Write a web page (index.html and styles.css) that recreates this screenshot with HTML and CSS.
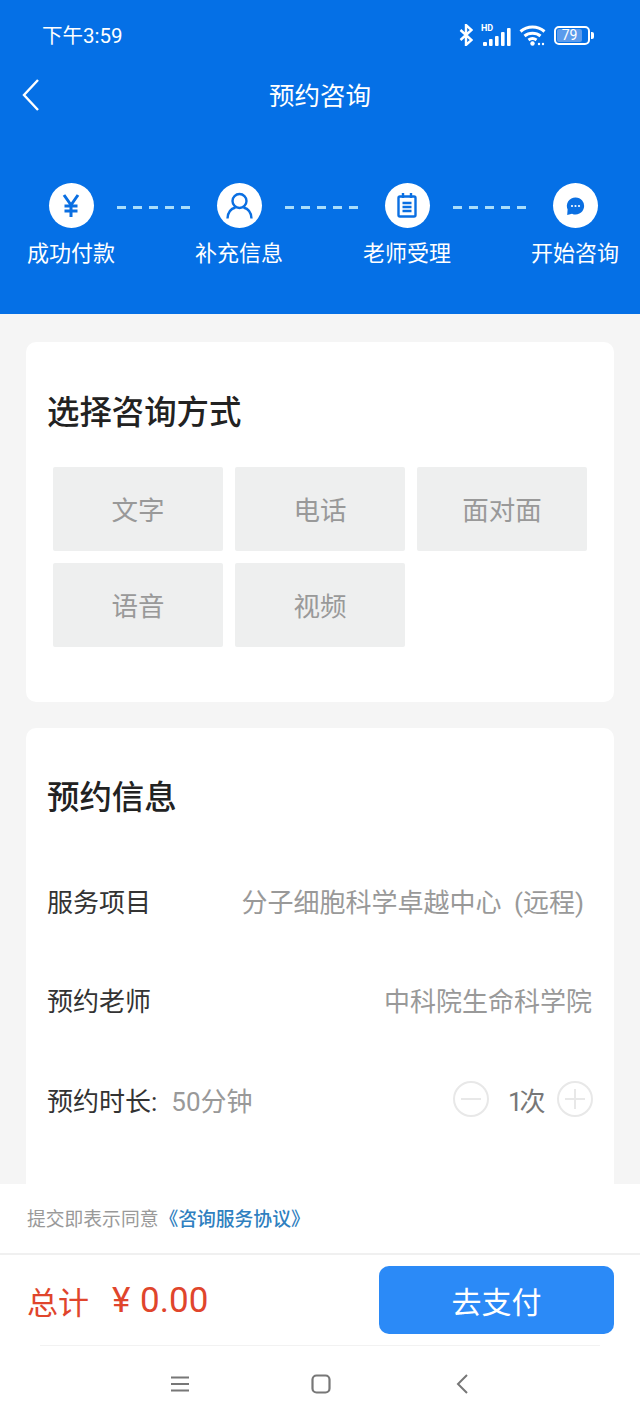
FILE: index.html
```html
<!DOCTYPE html>
<html lang="zh-CN">
  <head>
    <meta charset="UTF-8" />
    <meta name="viewport" content="width=device-width, initial-scale=1.0" />
    <title>预约咨询</title>
    <link rel="stylesheet" href="styles.css">
  </head>
  <body>
    <div class="page">
      <!-- 顶部蓝色区域 -->
      <header class="top">
        <div class="status-bar">
          <span class="status-time">下午3:59</span>
          <div class="status-icons">
            <svg viewBox="0 0 14 22" width="14" height="22" fill="none" stroke="#fff" stroke-width="2.4"><path d="M1.500 6l11 10-5.500 5V1l5.500 5-11 10"/></svg>
            <div class="signal">
              <span class="signal-hd">HD</span>
              <svg viewBox="0 0 30 18" width="30" height="18" fill="#fff"><rect x="2" y="14" width="4" height="4" rx="1"/><rect x="8" y="11" width="3.600" height="7" rx="1"/><rect x="14" y="8" width="3.600" height="10" rx="1"/><rect x="20" y="4" width="3.600" height="14" rx="1"/><rect x="26" y="0" width="3.600" height="18" rx="1"/></svg>
            </div>
            <svg viewBox="0 0 27 22" width="27" height="22" fill="none" stroke="#fff" stroke-width="3"><path d="M1.500 7.500c7-6 17-6 24 0"/><path d="M5.500 12c4.500-3.800 11.500-3.800 16 0"/><path d="M9.500 16c2.400-1.800 5.600-1.800 8 0"/><circle cx="13.500" cy="19.500" r="2.200" fill="#fff" stroke="none"/><circle cx="20" cy="20" r="1.200" fill="#fff" stroke="none"/><circle cx="24" cy="20" r="1.200" fill="#fff" stroke="none"/></svg>
            <div class="battery">
              <div class="battery-body"><span class="battery-num">79</span></div>
              <span class="battery-cap"></span>
            </div>
          </div>
        </div>
        <div class="nav-bar">
          <svg class="nav-back" viewBox="0 0 18 34" width="18" height="34" fill="none" stroke="#fff" stroke-width="2.400"><path d="M16 2L2 17l14 15"/></svg>
          <h1>预约咨询</h1>
        </div>
        <div class="steps">
          <div class="step">
            <div class="step-circle">
              <svg viewBox="0 0 18 23" width="18" height="23" fill="none" stroke="#0a6fe2" stroke-width="3"><path d="M2 1l7 10 7-10M9 11v12M2.500 12h13M2.500 17h13"/></svg>
            </div>
            <span>成功付款</span>
          </div>
          <div class="step-line"></div>
          <div class="step">
            <div class="step-circle">
              <svg viewBox="0 0 27 27" width="27" height="27" fill="none" stroke="#0a6fe2" stroke-width="2.400"><circle cx="13.500" cy="9" r="7"/><path d="M1.500 26.500c.3-6.500 4-10 8-11M25.500 26.500c-.3-6.500-4-10-8-11"/></svg>
            </div>
            <span>补充信息</span>
          </div>
          <div class="step-line"></div>
          <div class="step">
            <div class="step-circle">
              <svg viewBox="0 0 20 25" width="20" height="25" fill="none" stroke="#0a6fe2" stroke-width="2.400"><rect x="1.500" y="3.500" width="17" height="20" rx="1.500"/><path d="M6 0v5M14 0v5M5.500 10h9M5.500 14h9M5.500 18h9"/></svg>
            </div>
            <span>老师受理</span>
          </div>
          <div class="step-line"></div>
          <div class="step">
            <div class="step-circle">
              <svg viewBox="0 0 20 20" width="20" height="20"><path d="M10.500 1.500a8.500 8.500 0 1 1-3.500 16.200L2.200 19 2.600 13.500A8.500 8.500 0 0 1 10.500 1.500z" fill="#0a6fe2"/><circle cx="7" cy="10" r="1.100" fill="#fff"/><circle cx="10.500" cy="10" r="1.100" fill="#fff"/><circle cx="14" cy="10" r="1.100" fill="#fff"/></svg>
            </div>
            <span>开始咨询</span>
          </div>
        </div>
      </header>

      <main class="content">
        <!-- 选择咨询方式 -->
        <section class="card card-ways">
          <h2>选择咨询方式</h2>
          <div class="ways">
            <div class="way">文字</div>
            <div class="way">电话</div>
            <div class="way">面对面</div>
            <div class="way">语音</div>
            <div class="way">视频</div>
          </div>
        </section>

        <!-- 预约信息 -->
        <section class="card card-info">
          <h2>预约信息</h2>
          <div class="info-row">
            <span class="info-label">服务项目</span>
            <span class="info-value info-service">分子细胞科学卓越中心 (远程)</span>
          </div>
          <div class="info-row">
            <span class="info-label">预约老师</span>
            <span class="info-value">中科院生命科学院</span>
          </div>
          <div class="info-row">
            <div>
              <span class="info-label">预约时长:</span><span class="info-value info-duration">50分钟</span>
            </div>
            <div class="stepper">
              <span class="stepper-btn stepper-minus"></span>
              <span class="stepper-num">1次</span>
              <span class="stepper-btn stepper-plus"></span>
            </div>
          </div>
        </section>
      </main>

      <!-- 底部支付栏 -->
      <footer class="bottom">
        <p class="agree">提交即表示同意<a>《咨询服务协议》</a></p>
        <div class="pay-row">
          <div class="total"><span>总计</span><span class="total-num">¥ 0.00</span></div>
          <button class="pay-btn">去支付</button>
        </div>
        <div class="sys-nav">
          <svg viewBox="0 0 18 16" width="18" height="16" fill="none" stroke="#777" stroke-width="2"><path d="M0 1.500h18M0 8h18M0 14.500h18"/></svg>
          <svg viewBox="0 0 20 20" width="20" height="20" fill="none" stroke="#777" stroke-width="2.200"><rect x="1.500" y="1.500" width="17" height="17" rx="4"/></svg>
          <svg class="sys-back" viewBox="0 0 12 20" width="12" height="20" fill="none" stroke="#777" stroke-width="2"><path d="M11 1L2 10l9 9"/></svg>
        </div>
      </footer>
    </div>
  </body>
</html>
```

FILE: styles.css
```css
* {
  box-sizing: border-box;
}
body {
  margin: 0;
  font-family: Roboto, "Noto Sans CJK SC", sans-serif;
  background-color: #f5f5f5;
  color: #333;
}
.page {
  display: flex;
  flex-direction: column;
  height: 1422px;
  overflow: hidden;
}

/* 顶部 */
.top {
  height: 314px;
  flex-shrink: 0;
  background-color: #0570e6;
  color: white;
}
.status-bar {
  display: flex;
  justify-content: space-between;
  align-items: center;
  height: 34px;
  margin-top: 17px;
  padding: 0 46px 0 42px;
}
.status-time {
  font-size: 20.500px;
}
.status-icons {
  display: flex;
  align-items: center;
  gap: 8px;
  margin-top: 2px;
}
.signal {
  position: relative;
  display: flex;
  align-items: flex-end;
  width: 30px;
  height: 22px;
}
.signal-hd {
  position: absolute;
  top: 0;
  left: 0;
  font-size: 9px;
  font-weight: 700;
  line-height: 9px;
}
.battery {
  display: flex;
  align-items: center;
  gap: 1px;
}
.battery-body {
  width: 36px;
  height: 19px;
  border: 2px solid #fff;
  border-radius: 5px;
  padding: 1px;
}
.battery-num {
  display: block;
  width: 25px;
  height: 13px;
  background-color: #5b9bec;
  border-radius: 2px;
  font-size: 14px;
  line-height: 13px;
  text-align: center;
}
.battery-cap {
  width: 3px;
  height: 7px;
  background-color: #fff;
  border-radius: 0 2px 2px 0;
}
.nav-bar {
  position: relative;
  display: flex;
  justify-content: center;
  align-items: center;
  height: 44px;
  margin-top: 20px;
}
.nav-bar h1 {
  margin: 0;
  font-size: 25.500px;
  font-weight: 400;
}
.nav-back {
  position: absolute;
  left: 22px;
  top: 7px;
}
.steps {
  display: flex;
  align-items: flex-start;
  justify-content: space-between;
  margin-top: 68px;
  padding: 0 20px 0 26px;
}
.step {
  display: flex;
  flex-direction: column;
  align-items: center;
  gap: 10px;
  width: 90px;
  font-size: 22px;
  line-height: 32px;
}
.step-circle {
  display: flex;
  align-items: center;
  justify-content: center;
  width: 45px;
  height: 45px;
  border-radius: 50%;
  background-color: white;
}
.step-line {
  width: 73px;
  height: 3px;
  margin: 23px 2px 0 -1px;
  background: repeating-linear-gradient(to right, #a9ddfb 0 9px, transparent 9px 16px);
}

/* 内容卡片 */
.content {
  flex: 1;
  min-height: 0;
  overflow: hidden;
  padding: 28px 26px 0;
}
.card {
  background-color: white;
  border-radius: 10px;
  padding: 0 22px 0 21px;
}
.card h2 {
  margin: 0;
  font-size: 32.400px;
  font-weight: 500;
  line-height: 46px;
  color: #222;
}
.card-ways {
  height: 360px;
  padding-top: 48px;
}
.ways {
  display: grid;
  grid-template-columns: repeat(3, 170px);
  grid-auto-rows: 84px;
  gap: 12px;
  margin: 31px 0 0 6px;
}
.way {
  display: flex;
  align-items: center;
  justify-content: center;
  padding-bottom: 2px;
  background-color: #eeefef;
  border-radius: 2px;
  font-size: 26.500px;
  color: #999;
}
.card-info {
  height: 480px;
  margin-top: 26px;
  padding-top: 47px;
}
.info-row {
  display: flex;
  justify-content: space-between;
  align-items: center;
  height: 99.500px;
  font-size: 26px;
}
.card-info h2 + .info-row {
  margin-top: 29.500px;
}
.info-label {
  color: #333;
}
.info-value {
  color: #999;
}
.info-service {
  padding-right: 8px;
  word-spacing: 6px;
}
.info-duration {
  margin-left: 14px;
}
.stepper {
  display: flex;
  align-items: center;
  margin-right: -1px;
}
.stepper-btn {
  position: relative;
  width: 36px;
  height: 36px;
  border: 2px solid #e8e8e8;
  border-radius: 50%;
}
.stepper-minus::before,
.stepper-plus::before {
  content: "";
  position: absolute;
  left: 6px;
  right: 6px;
  top: 15px;
  border-top: 2px solid #e8e8e8;
}
.stepper-plus::after {
  content: "";
  position: absolute;
  top: 6px;
  bottom: 6px;
  left: 15px;
  border-left: 2px solid #e8e8e8;
}
.stepper-num {
  width: 68px;
  padding-left: 19px;
  letter-spacing: -3px;
  color: #777;
}

/* 底部 */
.bottom {
  flex-shrink: 0;
  height: 238px;
  background-color: white;
}
.agree {
  display: flex;
  align-items: center;
  height: 71px;
  margin: 0;
  padding: 0 0 2px 27px;
  border-bottom: 2px solid #f0f0f0;
  font-size: 18.800px;
  color: #999;
}
.agree a {
  margin-left: 1px;
  font-weight: 500;
  color: #2f80c0;
}
.pay-row {
  display: flex;
  justify-content: space-between;
  align-items: center;
  height: 90px;
  margin: 0 26px 0 27px;
}
.total {
  display: flex;
  align-items: center;
  gap: 23px;
  color: #e0452c;
  font-size: 31px;
}
.total-num {
  font-size: 35px;
  word-spacing: 1px;
}
.pay-btn {
  width: 235px;
  height: 68px;
  border: none;
  border-radius: 10px;
  background-color: #2b8af7;
  color: white;
  font-family: inherit;
  font-size: 30px;
}
.sys-nav {
  display: flex;
  align-items: center;
  gap: 122px;
  height: 77px;
  margin: 0 40px;
  padding: 0 0 0 131px;
  border-top: 1px solid #f2f2f2;
}
.sys-back {
  margin-left: 3px;
}
```
